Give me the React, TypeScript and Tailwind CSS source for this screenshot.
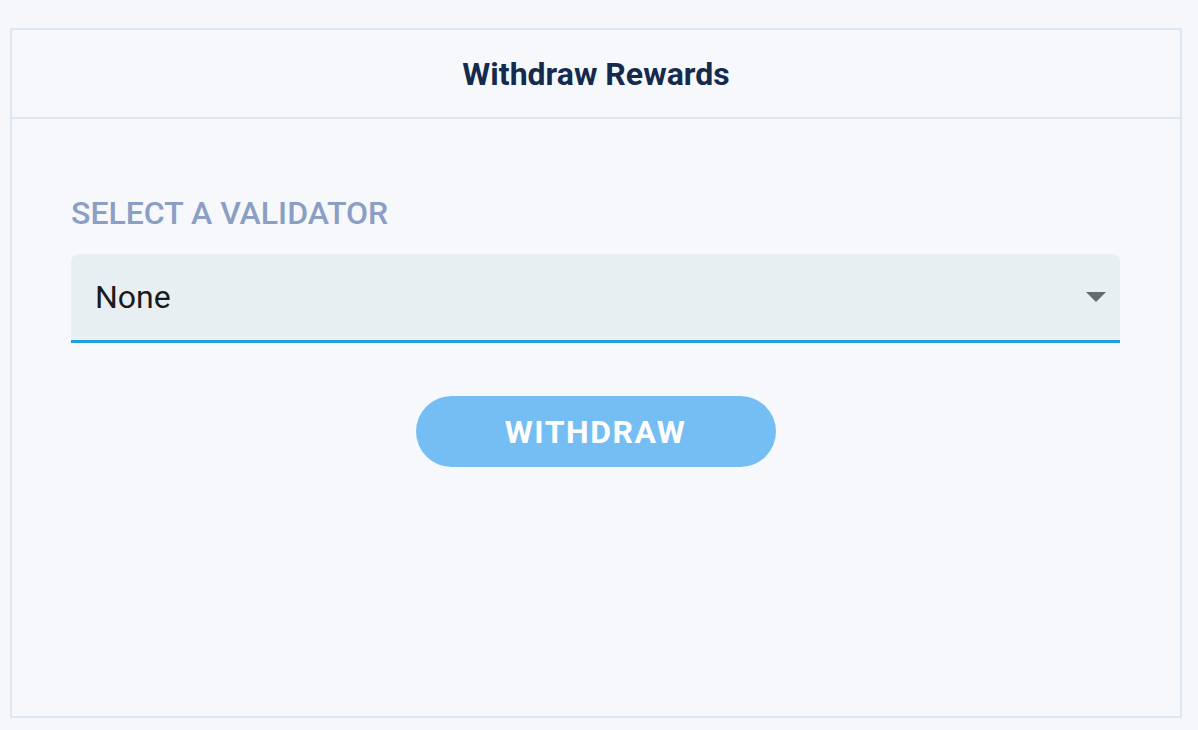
export default function App() {
  return (
    <div className="min-h-screen w-full bg-[#f5f7fb] pl-[10px] pr-[16px] pt-[28px] font-['Roboto',sans-serif]">
      <div className="flex h-[690px] flex-col border-2 border-[#dde7f1] bg-[#f6f8fc]">
        {/* Header */}
        <div className="flex h-[89px] shrink-0 items-center justify-center border-b-2 border-[#dde7f1]">
          <h2 className="text-[32px] font-bold text-[#152a4c]">Withdraw Rewards</h2>
        </div>

        {/* Body */}
        <div className="flex flex-col pl-[59px] pr-[60px] pt-[78px]">
          <label className="text-[32px] font-medium uppercase leading-none text-[#8b9ec4]">
            Select a validator
          </label>
          <div className="mt-[25px] flex h-[89px] items-center justify-between rounded-t-[8px] border-b-[3px] border-[#1e9fe0] bg-[#e8eff3] pl-[24px] pr-[14px]">
            <span className="text-[32px] text-[#1b1b1b]">None</span>
            <svg width="20" height="10" viewBox="0 0 20 10">
              <path d="M0 0h20L10 10z" fill="#666a6e" />
            </svg>
          </div>
          <div className="mt-[53px] flex justify-center">
            <button className="h-[71px] w-[360px] rounded-full bg-[#74bef4] text-[32px] font-bold tracking-[1.5px] text-white">
              WITHDRAW
            </button>
          </div>
        </div>
      </div>
    </div>
  );
}
